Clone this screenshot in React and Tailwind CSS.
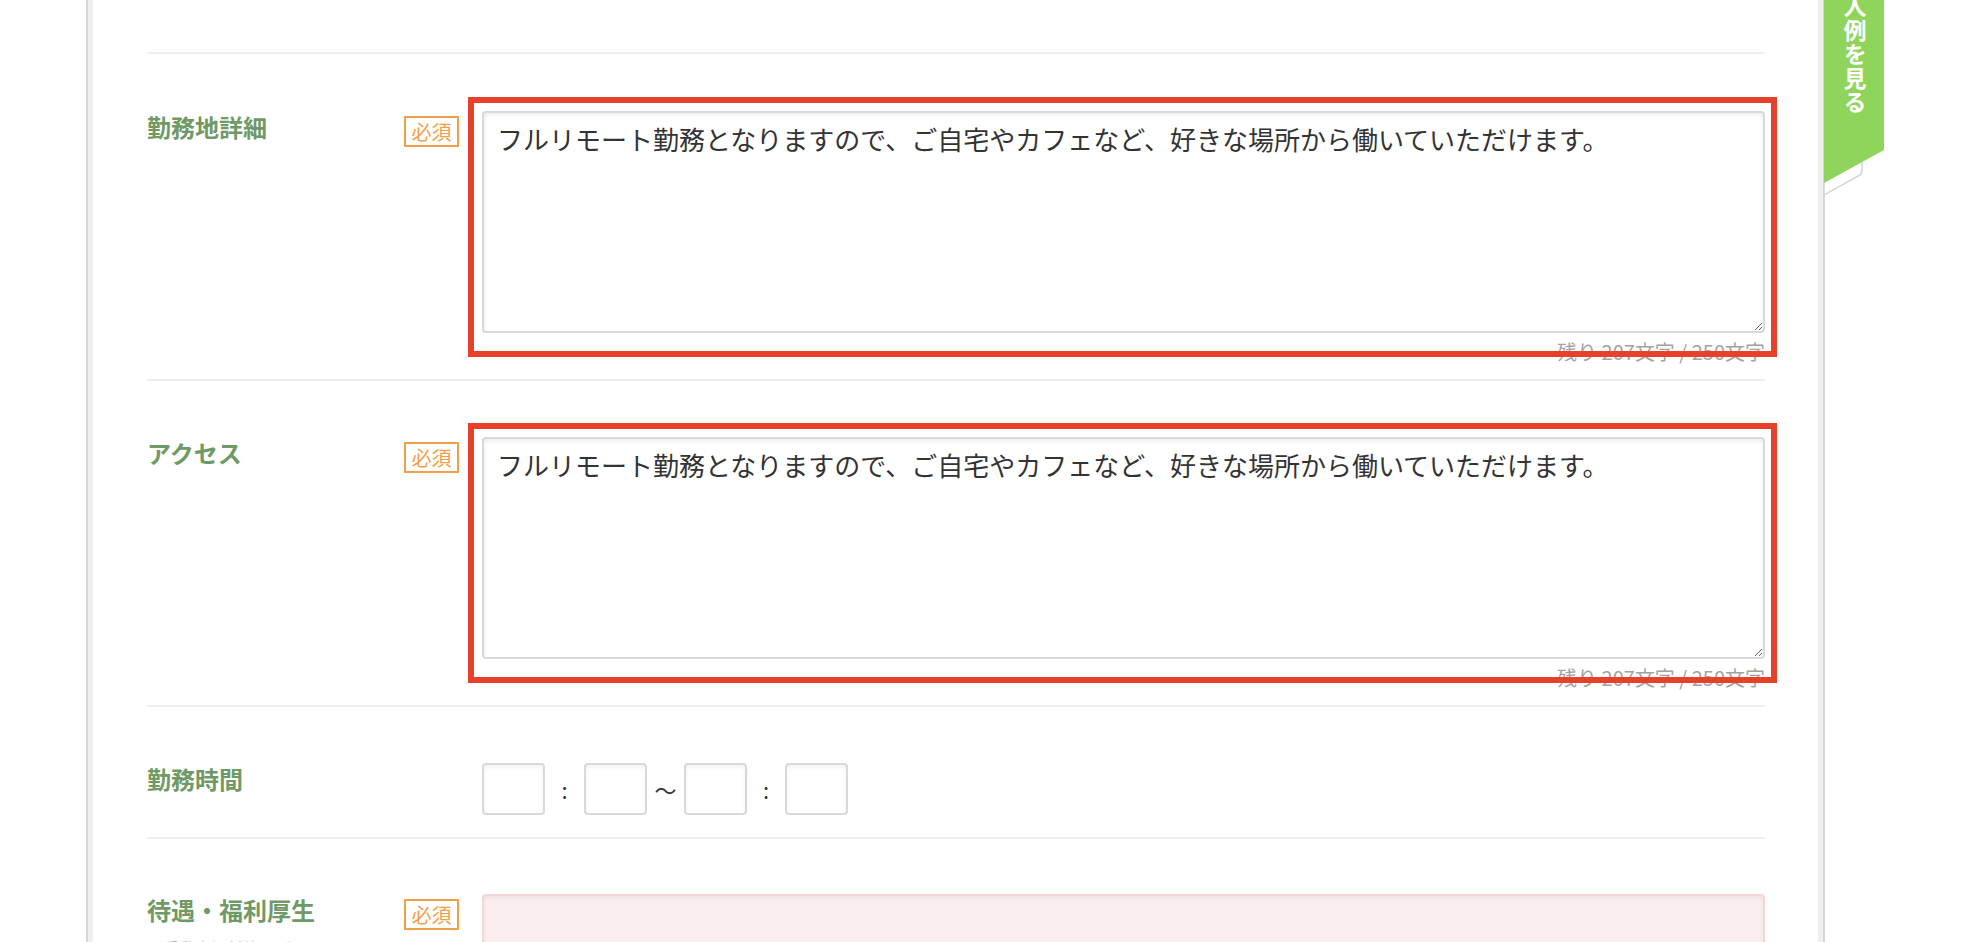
import React from 'react';

const BODY_TEXT = 'フルリモート勤務となりますので、ご自宅やカフェなど、好きな場所から働いていただけます。';

// orange "必須" tag shown next to required fields
function RequiredBadge() {
  return (
    <div className="flex h-[31px] w-[55px] items-center justify-center border-2 border-[#f1a04a] text-[20px] leading-[27px] text-[#f1a04a]">
      必須
    </div>
  );
}

function FormRow({ label, note, required, children, className = '' }) {
  return (
    <div className={`flex border-t-2 border-[#efefef] ${className}`}>
      <div className="w-[257px] shrink-0">
        <p className="text-[24px] font-bold leading-[32px] text-[#6f9a66]">{label}</p>
        {note && <p className="mt-[10px] text-[16px] leading-[24px] text-[#86a3c9]">{note}</p>}
      </div>
      <div className="w-[55px] shrink-0 pt-[5px]">{required && <RequiredBadge />}</div>
      <div className="ml-[23px] min-w-0 flex-1">{children}</div>
    </div>
  );
}

// textarea + remaining-characters counter, with the red highlight frame on top
function CountedTextarea({ value, max = 250 }) {
  const left = max - value.length;
  return (
    <div className="relative">
      <textarea
        defaultValue={value}
        className="block h-[222px] w-full rounded-[4px] border-2 border-[#d9d9d9] bg-white pl-[13px] pr-[14px] pt-[6px] text-[26px] leading-[1.5] text-[#333] shadow-[inset_0_2px_4px_rgba(0,0,0,0.08)] outline-none"
      />
      <p className="mt-[6px] text-right text-[20px] leading-[26px] text-[#a3a3a3]">
        残り {left}文字 / {max}文字
      </p>
      <div className="pointer-events-none absolute left-[-14px] right-[-12px] top-[-14px] z-10 h-[260px] border-[6px] border-[#e8412b]" />
    </div>
  );
}

function TimeBox() {
  return (
    <div className="h-[52px] w-[63px] shrink-0 rounded-[4px] border-2 border-[#d9d9d9] bg-white shadow-[inset_0_2px_4px_rgba(0,0,0,0.06)]" />
  );
}

function SampleTab() {
  return (
    <div className="absolute left-[1824px] top-0 h-[200px] w-[62px]">
      <svg width="62" height="200" viewBox="0 0 62 200" className="absolute left-0 top-0">
        <path d="M38 158 L38 170 Q38 174 35 175.5 L0 195 L0 180 Z" fill="#fff" stroke="#d4d4d4" strokeWidth="1.5" />
        <path d="M0 0 H60 V150 L0 183 Z" fill="#8fd55c" />
      </svg>
      <div className="absolute left-[18px] top-[-29px] text-[23px] font-bold leading-[25px] tracking-[1px] text-white [writing-mode:vertical-rl]">
        求人例を見る
      </div>
    </div>
  );
}

export default function App() {
  return (
    <div className="relative h-screen overflow-hidden bg-white font-['Noto_Sans_CJK_JP','Noto_Sans',sans-serif]">
      <div className="ml-[86px] h-full w-[1739px] border-x-2 border-[#d7d7d7]">
        <div className="h-full border-x-[5px] border-[#efefef] pl-[54px] pr-[53px] pt-[52px]">
          <FormRow label="勤務地詳細" required className="pb-[14px] pt-[57px]">
            <CountedTextarea value={BODY_TEXT} />
          </FormRow>

          <FormRow label="アクセス" required className="pb-[14px] pt-[56px]">
            <CountedTextarea value={BODY_TEXT} />
          </FormRow>

          <FormRow label="勤務時間" className="pb-[22px] pt-[56px]">
            <div className="flex items-center text-[22px] text-[#333]">
              <TimeBox />
              <span className="w-[39px] text-center">:</span>
              <TimeBox />
              <span className="w-[37px] text-center">〜</span>
              <TimeBox />
              <span className="w-[38px] text-center">:</span>
              <TimeBox />
            </div>
          </FormRow>

          <FormRow label="待遇・福利厚生" note="※受動喫煙対策もご記入ください" required className="pt-[55px]">
            <textarea className="block h-[222px] w-full rounded-[4px] border-2 border-[#f5d6d6] bg-[#fbeeee] px-[14px] pt-[7px] text-[26px] shadow-[inset_0_2px_4px_rgba(0,0,0,0.06)] outline-none" />
          </FormRow>
        </div>
      </div>
      <SampleTab />
    </div>
  );
}
